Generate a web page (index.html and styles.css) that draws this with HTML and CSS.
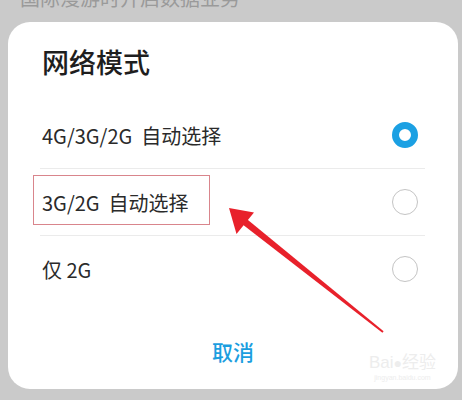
FILE: index.html
```html
<!DOCTYPE html>
<html lang="zh">
<head>
<meta charset="utf-8">
<link rel="stylesheet" href="styles.css">
</head>
<body>
<div class="page">
  <div class="behind">国际漫游时开启数据业务</div>
  <div class="card">
    <div class="title">网络模式</div>
    <div class="list">
      <div class="row">
        <span class="label">4G/3G/2G&nbsp;&nbsp;自动选择</span>
        <span class="radio on"></span>
      </div>
      <div class="row">
        <span class="label">3G/2G&nbsp;&nbsp;自动选择</span>
        <span class="radio"></span>
        <span class="mark"></span>
      </div>
      <div class="row last">
        <span class="label">仅 2G</span>
        <span class="radio"></span>
      </div>
    </div>
    <div class="cancel">取消</div>
    <div class="watermark"><span class="wm-big">Bai<span class="paw">●</span>经验</span><span class="wm-small">jingyan.baidu.com</span></div>
  </div>
  <svg class="arrow" width="462" height="400" viewBox="0 0 462 400">
    <polygon points="242.2,215.3 383.6,331.2 382.4,332.8 237.8,220.7" fill="#e8212b"/>
    <polygon points="229,208 254,212.5 236.5,234" fill="#e8212b"/>
  </svg>
</div>
</body>
</html>
```
FILE: styles.css
```css
html, body {
  margin: 0;
  padding: 0;
}
body {
  background: #cacaca;
  font-family: "Noto Sans CJK SC", "Noto Sans", sans-serif;
}
.page {
  position: relative;
  width: 462px;
  height: 400px;
  overflow: hidden;
}
.behind {
  height: 22px;
  margin-top: -16px;
  margin-bottom: 16px;
  padding-left: 20px;
  font-size: 20px;
  line-height: 28px;
  color: #9a9a9a;
}
.card {
  position: relative;
  margin-left: 8px;
  width: 450px;
  height: 367px;
  background: #fff;
  border-radius: 22px;
  box-sizing: border-box;
  padding-top: 25px;
}
.title {
  padding-left: 34px;
  font-size: 27px;
  line-height: 30px;
  font-weight: 500;
  color: #1e1e1e;
}
.list {
  margin: 25px 33px 0 32px;
}
.row {
  position: relative;
  height: 66px;
  display: flex;
  align-items: center;
  justify-content: space-between;
  padding: 0 7px 0 2px;
  border-bottom: 1px solid #ebebeb;
}
.row.last {
  border-bottom: none;
}
.label {
  font-size: 20px;
  color: #2a2a2a;
}
.radio {
  width: 26px;
  height: 26px;
  box-sizing: border-box;
  border-radius: 50%;
  border: 1.5px solid #c4c4c4;
}
.radio.on {
  border: 7px solid #1ba0e3;
}
.mark {
  position: absolute;
  left: -7px;
  top: 6px;
  width: 177px;
  height: 50px;
  box-sizing: border-box;
  border: 1px solid #d9858c;
}
.cancel {
  margin-top: 35px;
  text-align: center;
  font-size: 21px;
  line-height: 28px;
  font-weight: 500;
  color: #1b9edf;
}
.watermark {
  position: absolute;
  right: 22px;
  bottom: 6px;
  display: flex;
  flex-direction: column;
  align-items: center;
  color: #ededed;
  font-family: "Liberation Sans", "Noto Sans CJK SC", sans-serif;
}
.wm-big {
  font-size: 17px;
  line-height: 20px;
}
.paw {
  font-size: 14px;
}
.wm-small {
  font-size: 7px;
  line-height: 10px;
}
.arrow {
  position: absolute;
  left: 0;
  top: 0;
  pointer-events: none;
}
```
